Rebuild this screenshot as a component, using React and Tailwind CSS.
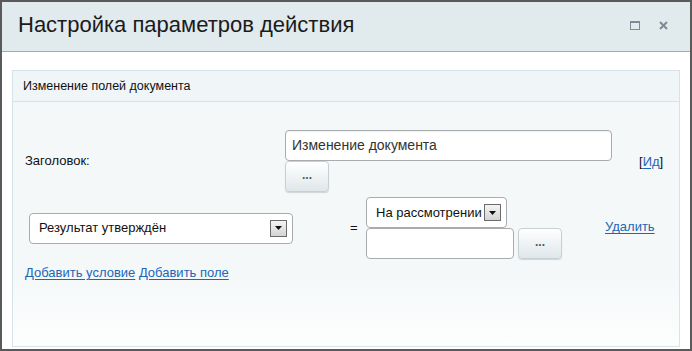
const font = { fontFamily: '"Liberation Sans", Arial, sans-serif' };

const SelectArrow = () => (
  <span className="flex h-[17px] w-[17px] items-center justify-center border border-[#6b6b6b] bg-[linear-gradient(to_bottom,#f4f4f4,#d4d4d4)]">
    <svg width="7" height="4" viewBox="0 0 7 4">
      <path d="M0 0h7L3.5 4z" fill="#111" />
    </svg>
  </span>
);

const DotsButton = ({ className = '' }) => (
  <button className={`flex h-[31px] w-[44px] items-center justify-center rounded-[4px] border border-[#c6d0d5] bg-[linear-gradient(to_bottom,#ffffff,#dfe7ea)] text-[12px] font-bold leading-none text-[#4a5a66] shadow-[0_1px_1px_rgba(0,0,0,0.15)] ${className}`}>
    <span className="-mt-[3px]">...</span>
  </button>
);

const Link = ({ children }) => (
  <a href="#" className="text-[#2166b5] underline underline-offset-[2px]">{children}</a>
);

export default function App() {
  return (
    <div style={font} className="flex h-[351px] w-[692px] flex-col border-2 border-[#5a5a5a] bg-white text-[#111]">
      {/* window header */}
      <div className="flex h-[50px] shrink-0 items-center justify-between border-b border-[#a3abaf] bg-[#e1eaed] pl-[16px] pr-[22px]">
        <div className="-mt-[4px] text-[22px] leading-none text-[#1b1b1b]">Настройка параметров действия</div>
        <div className="-mt-[3px] flex items-center gap-[19px]">
          <svg width="10" height="9" viewBox="0 0 10 9">
            <rect x="0.5" y="0.5" width="9" height="8" fill="none" stroke="#7d8a98" />
            <rect x="0" y="0" width="10" height="2" fill="#7d8a98" />
          </svg>
          <svg width="9" height="9" viewBox="0 0 9 9">
            <path d="M1 1l7 7M8 1L1 8" stroke="#7d8a98" strokeWidth="2" />
          </svg>
        </div>
      </div>

      {/* body */}
      <div className="flex flex-1 flex-col px-[10px] pb-[2px] pt-[18px]">
        <div className="flex flex-1 flex-col border border-[#d6e3e9]">
          <div className="flex h-[31px] shrink-0 items-center border-b border-[#d6e3e9] bg-[#f0f5f7] pl-[10px] text-[12.5px]">
            Изменение полей документа
          </div>

          <div className="flex-1 bg-[linear-gradient(to_bottom,#f5f8f9_72%,#fdfefe)] text-[13px]">
            {/* title row */}
            <div className="flex items-center pt-[28px]">
              <div className="w-[272px] pl-[12px]">Заголовок:</div>
              <div className="flex flex-col">
                <div className="flex h-[31px] w-[327px] items-center rounded-[4px] border border-[#a9acae] bg-white pl-[6px] text-[14px] text-[#333] shadow-[inset_0_1px_1px_rgba(0,0,0,0.06)]">
                  Изменение документа
                </div>
                <DotsButton />
              </div>
              <div className="ml-[27px] pt-[1px]">
                [<Link>Ид</Link>]
              </div>
            </div>

            {/* condition row */}
            <div className="mt-[5px] flex items-center">
              <div className="ml-[16px] flex h-[31px] w-[264px] items-center justify-between rounded-[4px] border border-[#a9acae] bg-white pl-[9px] pr-[5px]">
                <span>Результат утверждён</span>
                <SelectArrow />
              </div>
              <div className="ml-[57px] w-[16px]">=</div>
              <div className="flex flex-col">
                <div className="flex h-[31px] w-[141px] items-center justify-between rounded-[4px] border border-[#a9acae] bg-white pl-[9px] pr-[5px]">
                  <span>На рассмотрении</span>
                  <SelectArrow />
                </div>
                <div className="flex items-end">
                  <div className="h-[31px] w-[148px] rounded-[4px] border border-[#a9acae] bg-white" />
                  <DotsButton className="ml-[4px]" />
                </div>
              </div>
              <div className="ml-[43px] -mt-[2px]">
                <Link>Удалить</Link>
              </div>
            </div>

            {/* add links */}
            <div className="mt-[4px] pl-[12px]">
              <Link>Добавить условие</Link> <Link>Добавить поле</Link>
            </div>
          </div>
        </div>
      </div>
    </div>
  );
}
